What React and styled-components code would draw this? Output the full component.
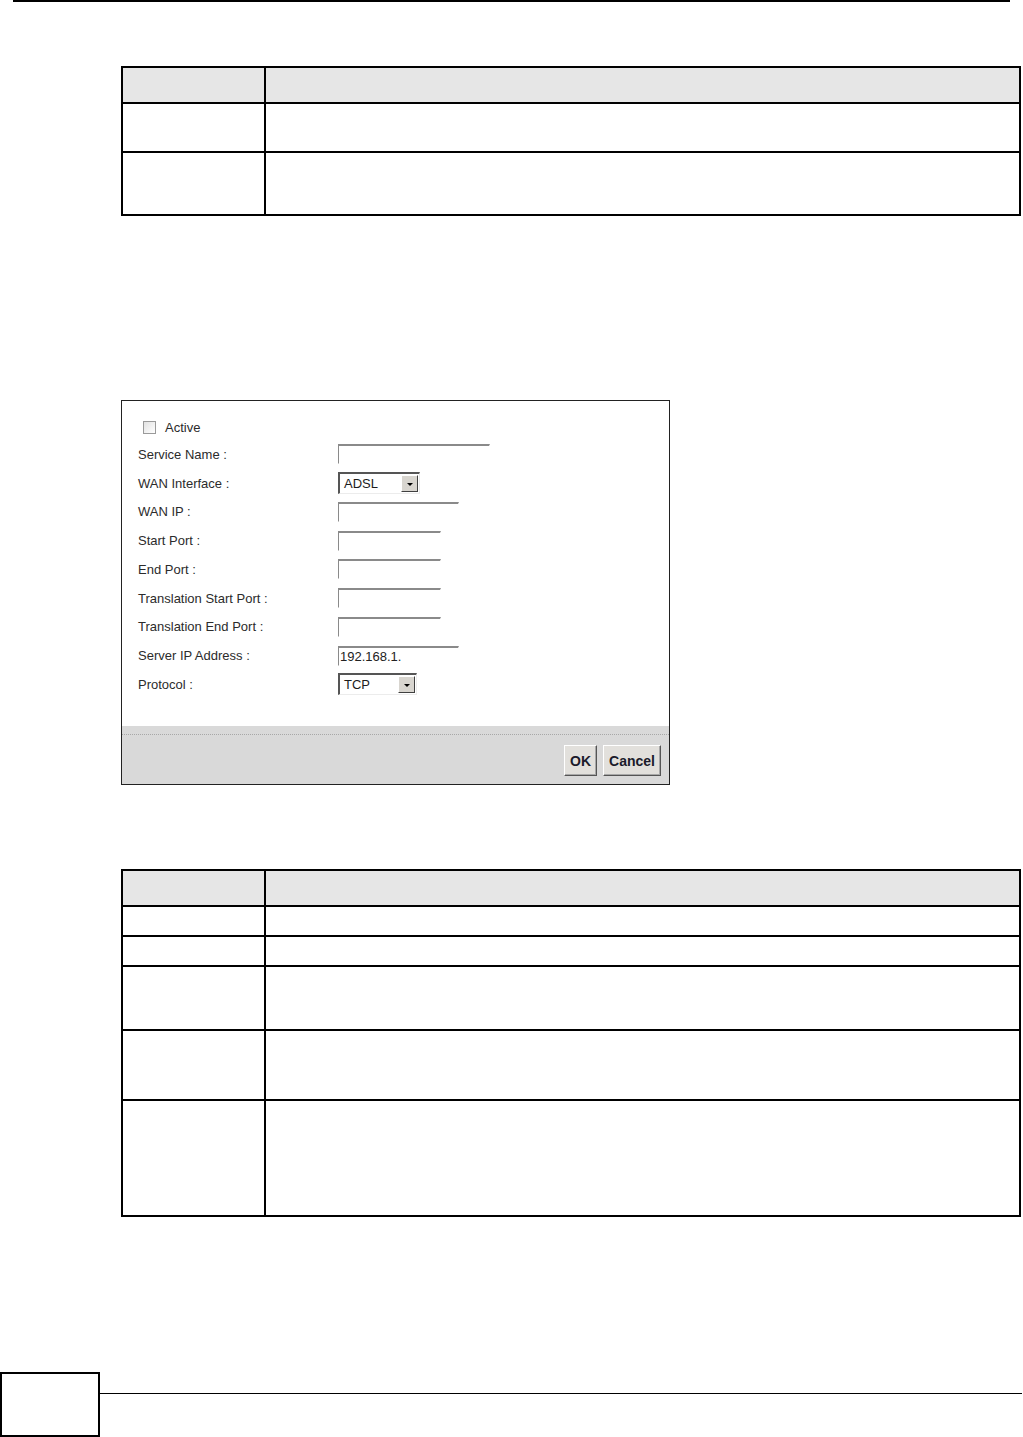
import React from "react";
import styled, { createGlobalStyle } from "styled-components";

const GlobalStyle = createGlobalStyle`
    html, body {
        margin: 0;
        padding: 0;
        background: #fff;
    }
    body {
        font-family: "Liberation Sans", Arial, sans-serif;
    }
    * {
        box-sizing: border-box;
    }
`;

const firstTable = [34, 49, 63];
const secondTable = [34, 30, 30, 64, 70, 116];

const fields = [
    { label: "Service Name :", kind: "input", width: 152 },
    { label: "WAN Interface :", kind: "select", width: 82, value: "ADSL" },
    { label: "WAN IP :", kind: "input", width: 121 },
    { label: "Start Port :", kind: "input", width: 103 },
    { label: "End Port :", kind: "input", width: 103 },
    { label: "Translation Start Port :", kind: "input", width: 103 },
    { label: "Translation End Port :", kind: "input", width: 103 },
    { label: "Server IP Address :", kind: "input", width: 121, value: "192.168.1." },
    { label: "Protocol :", kind: "select", width: 79, value: "TCP" },
];

const DocTable = ({ rows, top }) => (
    <Table top={top}>
        {rows.map((h, i) => (
            <Row key={i} h={h} header={i === 0} first={i === 0}>
                <Cell />
                <Cell divider />
            </Row>
        ))}
    </Table>
);

const Select = ({ width, value }) => (
    <SelectBox width={width}>
        <SelectValue>{value}</SelectValue>
        <DropButton>
            <Arrow />
        </DropButton>
    </SelectBox>
);

const App = () => {
    return (
        <Page>
            <GlobalStyle />
            <TopRule />
            <DocTable rows={firstTable} top={64} />

            <Panel>
                <Form>
                    <ActiveRow>
                        <CheckBox />
                        <Label>Active</Label>
                    </ActiveRow>
                    {fields.map((f) => (
                        <FieldRow key={f.label}>
                            <Label>{f.label}</Label>
                            {f.kind === "select" ? (
                                <Select width={f.width} value={f.value} />
                            ) : (
                                <TextInput width={f.width} defaultValue={f.value || ""} />
                            )}
                        </FieldRow>
                    ))}
                </Form>
                <PanelFooter>
                    <DottedRule />
                    <ButtonBar>
                        <Button>OK</Button>
                        <Button>Cancel</Button>
                    </ButtonBar>
                </PanelFooter>
            </Panel>

            <DocTable rows={secondTable} top={84} />

            <PageFooter>
                <PageNumberBox />
                <FooterRule />
            </PageFooter>
        </Page>
    );
};

export default App;

const Page = styled.div`
    width: 1023px;
    height: 1437px;
    display: flex;
    flex-direction: column;
    overflow: hidden;
`;

const TopRule = styled.div`
    margin-left: 13px;
    width: 997px;
    height: 2px;
    background: #000;
    flex-shrink: 0;
`;

const Table = styled.div`
    margin: ${({ top }) => top}px 0 0 121px;
    width: 900px;
    border: 2px solid #000;
    flex-shrink: 0;
`;

const Row = styled.div`
    display: grid;
    grid-template-columns: 141px 1fr;
    height: ${({ h }) => h}px;
    border-top: ${({ first }) => (first ? "none" : "2px solid #000")};
    background: ${({ header }) => (header ? "#e6e6e6" : "#fff")};
`;

const Cell = styled.div`
    border-left: ${({ divider }) => (divider ? "2px solid #000" : "none")};
`;

const Panel = styled.div`
    margin: 184px 0 0 121px;
    width: 549px;
    height: 385px;
    border: 1px solid #222;
    display: flex;
    flex-direction: column;
    flex-shrink: 0;
`;

const Form = styled.div`
    flex: 1;
    padding: 13px 0 0 16px;
    font-size: 13px;
    color: #2b2b2b;
`;

const ActiveRow = styled.div`
    display: flex;
    align-items: center;
    gap: 9px;
    height: 26px;
    padding-left: 5px;
`;

const CheckBox = styled.span`
    display: inline-block;
    width: 13px;
    height: 13px;
    border: 1px solid #9a9a9a;
    background: linear-gradient(135deg, #e2e2e2, #fff);
`;

const FieldRow = styled.div`
    display: grid;
    grid-template-columns: 200px auto;
    align-items: center;
    justify-items: start;
    height: 28.75px;
`;

const Label = styled.span`
    font-size: 13px;
    color: #2b2b2b;
    white-space: nowrap;
`;

const TextInput = styled.input`
    width: ${({ width }) => width}px;
    height: 20px;
    margin: 0;
    padding: 0 1px;
    border-style: solid;
    border-width: 2px 1px 1px 1px;
    border-color: #8a8a8a #fff #fff #8a8a8a;
    font-family: "Liberation Sans", Arial, sans-serif;
    font-size: 13px;
    color: #222;
    background: #fff;
    outline: none;
`;

const SelectBox = styled.div`
    display: flex;
    align-items: center;
    justify-content: space-between;
    width: ${({ width }) => width}px;
    height: 22px;
    border-style: solid;
    border-width: 2px 1px 1px 2px;
    border-color: #555 #ececec #ececec #555;
    background: #fff;
`;

const SelectValue = styled.span`
    padding-left: 4px;
    font-size: 13px;
    color: #1c1c1c;
`;

const DropButton = styled.span`
    display: flex;
    align-items: center;
    justify-content: center;
    width: 17px;
    height: 17px;
    margin-right: 1px;
    background: #d8d5cf;
    border-style: solid;
    border-width: 1px;
    border-color: #fff #404040 #404040 #fff;
`;

const Arrow = styled.span`
    width: 0;
    height: 0;
    border-left: 3px solid transparent;
    border-right: 3px solid transparent;
    border-top: 3px solid #000;
    margin-top: 1px;
`;

const PanelFooter = styled.div`
    height: 58px;
    background: #d9d9d9;
    padding-top: 8px;
`;

const DottedRule = styled.div`
    border-top: 1px dotted #a8a8a8;
`;

const ButtonBar = styled.div`
    display: flex;
    justify-content: flex-end;
    gap: 6px;
    padding: 10px 8px 0 0;
`;

const Button = styled.button`
    height: 31px;
    padding: 0 5px;
    margin: 0;
    font-family: "Liberation Sans", Arial, sans-serif;
    font-size: 14px;
    font-weight: bold;
    color: #1b1b2b;
    background: #e2e0dc;
    border-style: solid;
    border-width: 1px;
    border-color: #fff #555 #555 #fff;
    box-shadow: inset -1px -1px 0 #a8a8a8;
`;

const PageFooter = styled.div`
    margin-top: auto;
    display: flex;
    align-items: flex-start;
    flex-shrink: 0;
`;

const PageNumberBox = styled.div`
    width: 100px;
    height: 65px;
    border: 2px solid #000;
`;

const FooterRule = styled.div`
    width: 922px;
    height: 1px;
    margin-top: 21px;
    background: #000;
`;
